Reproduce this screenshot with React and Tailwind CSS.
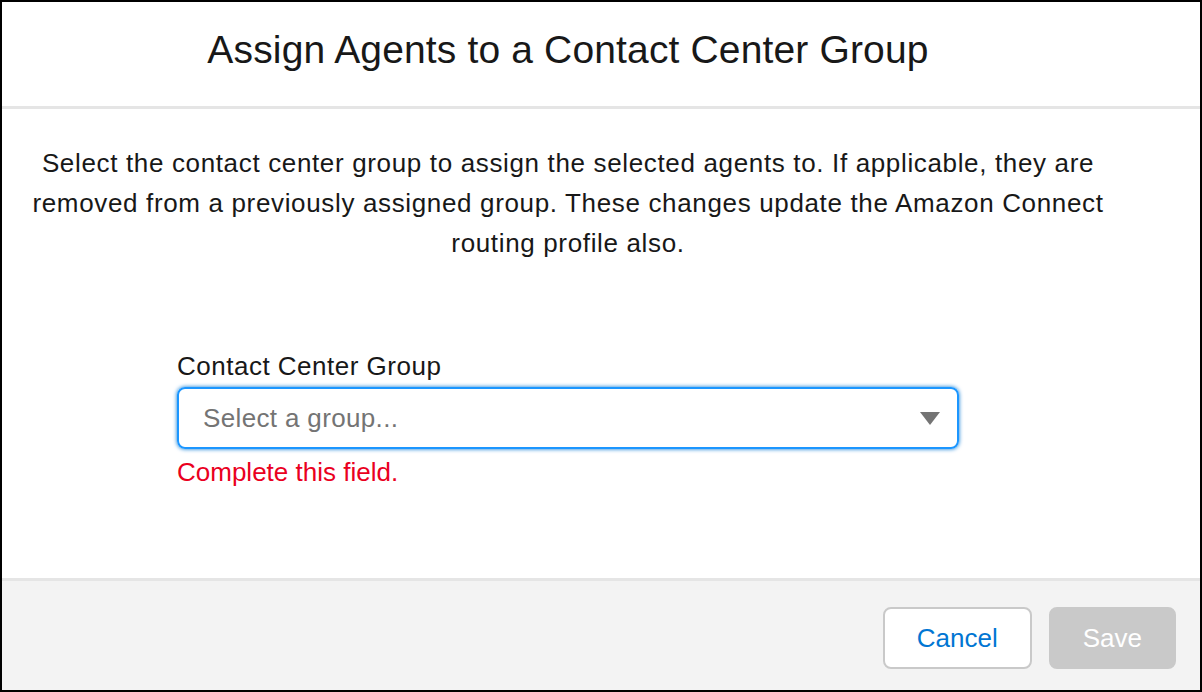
export default function App() {
  const font = { fontFamily: '"Liberation Sans", Arial, sans-serif' };
  return (
    <div
      className="w-[1202px] h-[692px] border-2 border-black bg-white flex flex-col text-[#181818]"
      style={font}
    >
      <div className="h-[104px] shrink-0 flex items-center justify-center pr-[66px] pb-[9px]">
        <h1 className="text-[39px] leading-none font-normal tracking-[0.15px] text-[#181818]">
          Assign Agents to a Contact Center Group
        </h1>
      </div>
      <div className="h-[3px] bg-[#e5e5e5] shrink-0" />
      <div className="flex-1 flex flex-col items-center pr-[66px] pt-[34px]">
        <p className="text-[26px] leading-[40px] tracking-[0.65px] text-center whitespace-nowrap">
          Select the contact center group to assign the selected agents to. If applicable, they are
          <br />
          removed from a previously assigned group. These changes update the Amazon Connect
          <br />
          routing profile also.
        </p>
        <div className="w-[782px] mt-[88px] flex flex-col">
          <label className="text-[26px] leading-[30px] tracking-[0.5px]">Contact Center Group</label>
          <div className="mt-[6px] h-[62px] rounded-[8px] border-2 border-[#1b96ff] shadow-[0_0_4px_#0176d3] flex items-center justify-between pl-[24px] pr-[17px]">
            <span className="text-[26px] tracking-[0.35px] text-[#747474]">Select a group...</span>
            <svg width="20" height="13" viewBox="0 0 20 13">
              <path d="M0 0 H20 L10 13 Z" fill="#747474" />
            </svg>
          </div>
          <div className="mt-[8px] text-[26px] leading-[30px] text-[#ea001e]">
            Complete this field.
          </div>
        </div>
      </div>
      <div className="h-[3px] bg-[#e5e5e5] shrink-0" />
      <div className="h-[109px] shrink-0 bg-[#f3f3f3] flex items-start justify-end gap-[17px] pt-[26px] pr-[24px]">
        <button className="h-[62px] px-[32px] rounded-[8px] border-2 border-[#c9c9c9] bg-white text-[26px] text-[#0176d3]">
          Cancel
        </button>
        <button className="h-[62px] px-[32px] rounded-[8px] border-2 border-[#c9c9c9] bg-[#c9c9c9] text-[26px] text-white">
          Save
        </button>
      </div>
    </div>
  );
}
